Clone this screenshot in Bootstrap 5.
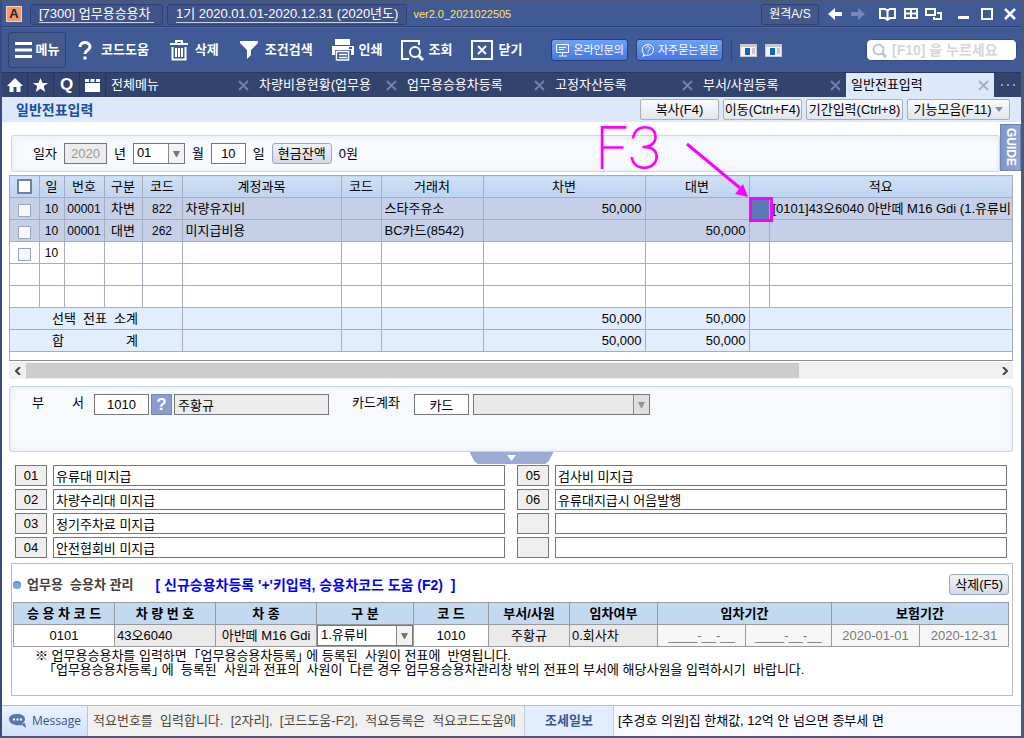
<!DOCTYPE html>
<html lang="ko">
<head>
<meta charset="utf-8">
<meta name="viewport" content="width=device-width, initial-scale=1">
<title>일반전표입력</title>
<link rel="stylesheet" href="https://cdn.jsdelivr.net/npm/bootstrap@5.3.0/dist/css/bootstrap.min.css">
<style>
  body { font-family: "Liberation Sans", "Noto Sans CJK KR", sans-serif; font-size: 13px; line-height: 18px; color: #000; background: #fff; }
  button, input, select { font: inherit; color: inherit; }
  button { border: 0; background: none; padding: 0; }
  a { color: inherit; text-decoration: none; }
  svg { display: block; flex: none; }
  .frame { min-height: 100vh; border: 2px solid #4b5975; border-left-color: #3b4a7d; border-right-width: 3px; }
  .keep { white-space: pre; }

  /* title bar */
  .titlebar { height: 25px; background: #405a96; color: #fff; border-bottom: 1px solid #2d4274; }
  .logo { width: 16px; height: 16px; background: #f09a70; border: 1px solid #fbd3bd; color: #222; font-weight: 700; line-height: 14px; text-align: center; }
  .titlebox { height: 21px; border: 1px solid #2d4274; border-radius: 3px; background: #405487; }
  .titlebox a { border-bottom: 1px solid #c9d2e8; line-height: 17px; }
  .titlebox.first { width: 133px; }
  .ver { color: #ffe75e; font-size: 11px; margin-left: 6px; }
  .remote { width: 58px; height: 21px; border: 1px solid #2d4274; border-radius: 3px; background: #44578a; font-size: 12px; }
  .winbtn { width: 23px; height: 22px; display: flex; align-items: center; justify-content: center; }
  .winset { margin-left: 7px; }

  /* tool bar */
  .toolbar { height: 45px; background: #405a96; color: #fff; border-top: 1px solid #4c66a1; }
  .tool { display: flex; align-items: center; gap: 4px; font-weight: 700; }
  .tool .glyph { width: 24px; display: flex; justify-content: center; }
  .tools { gap: 18px; padding: 0 29px 0 7px; }
  .menubtn { width: 58px; height: 36px; border: 1px solid #2d4274; border-radius: 3px; background: #44598c; justify-content: center; margin-left: 6px; }
  .askbtn { height: 22px; border: 1px solid #2a3e70; border-radius: 3px; background: linear-gradient(#6ea2f7, #4577e2); font-size: 11px; padding: 0 3px 0 4px; gap: 3px; }
  .divider { width: 1px; height: 22px; background: #2f4579; }
  .finder { width: 151px; height: 22px; border: 1px solid #34497d; border-radius: 5px; background: #fff; padding: 0 5px; gap: 5px; }
  .finder input { width: 118px; border: 0; outline: 0; padding: 0; background: none; font-weight: 700; font-size: 14px; line-height: 18px; }
  .finder input::placeholder { color: #d5d6da; opacity: 1; }

  /* tabs */
  .tabbar { height: 25px; background: #32446e; color: #fff; border-top: 1px solid #28375c; }
  .quick { width: 26px; display: flex; align-items: center; justify-content: center; border-right: 1px solid #24355f; font-weight: 700; font-size: 17px; }
  .tabitem { width: 148px; display: flex; align-items: center; justify-content: space-between; padding: 0 5px; color: #fff; }
  .tabitem.active { background: #dde9fb; color: #000; }
  .subbar { height: 25px; background: #dde9fb; padding-right: 11px; }
  .subbar h1 { font-size: 14px; font-weight: 700; color: #174e9e; margin: 0; padding-left: 14px; line-height: 20px; }
  .fnbtn { height: 21px; line-height: 18px; border: 1px solid #a9aeb8; border-radius: 2px; background: linear-gradient(#fafbfc, #e2e5ea); white-space: nowrap; }
  .w79 { width: 79px; } .w98 { width: 97px; } .w103 { width: 103px; }

  /* entry panels */
  .panelbox { background: #f7f9fd; border: 1px solid #c8d6ea; border-radius: 3px; box-shadow: inset 0 0 6px #e3ebf6; }
  .datepanel { height: 37px; margin: 13px 0 3px 9px; padding-left: 21px; gap: 7px; }
  .guide { width: 21px; height: 47px; margin-top: 2px; writing-mode: vertical-rl; background: linear-gradient(90deg, #7f97c6, #93a6cf); border: 1px solid #6c83b3; color: #fff; font-weight: 700; font-size: 12px; line-height: 18px; }
  .field { height: 21px; border: 1px solid #76777b; border-radius: 0; background-color: #fff; padding: 0 3px; }
  .field:disabled, .field.off { background-color: #ececec; color: #999; opacity: 1; }
  .picker { appearance: none; padding: 0 18px 2px 3px; line-height: 17px;
    background: #fff url("data:image/svg+xml,%3Csvg xmlns='http://www.w3.org/2000/svg' width='16' height='19'%3E%3Crect width='16' height='19' fill='%23f3f3f3'/%3E%3Cpath d='M0 0h1v19H0z' fill='%23898989'/%3E%3Cpath d='M5 7h7l-3 6h-1z' fill='%23757575'/%3E%3C/svg%3E") right center no-repeat; }
  .picker:disabled { background-color: #e9e9e9;
    background-image: url("data:image/svg+xml,%3Csvg xmlns='http://www.w3.org/2000/svg' width='16' height='19'%3E%3Crect width='16' height='19' fill='%23dfdfdf'/%3E%3Cpath d='M0 0h1v19H0z' fill='%23898989'/%3E%3Cpath d='M5 7h7l-3 6h-1z' fill='%23959595'/%3E%3C/svg%3E"); }
  .f35 { width: 35px; } .f43 { width: 43px; } .f52 { width: 52px; } .f55 { width: 55px; } .f155 { width: 155px; } .f177 { width: 177px; }
  .cashbtn { height: 21px; line-height: 18px; border: 1px solid #98a7cc; border-radius: 3px; background: linear-gradient(#f0f2f6, #d5dae3); padding: 0 5px; }

  /* slip table */
  .slipwrap { margin: 0 8px 0 7px; border: 1px solid #a5adc0; border-top: 0; border-bottom-color: #8d8d8d; padding-bottom: 8px; }
  .slip { width: 100%; table-layout: fixed; border-collapse: collapse; }
  .slip th, .slip td { height: 22px; padding: 0 3px; border: 1px solid #a5adc0; line-height: 18px; white-space: nowrap; overflow: hidden; font-weight: 400; }
  .slip tr > :first-child { border-left: 0; }
  .slip tr > :last-child { border-right: 0; }
  .slip thead th { background: linear-gradient(#cfe0f7, #bed4ef); text-align: center; }
  .slip .narrow { font-size: 12px; padding: 0; text-align: center; }
  .slip td.desc { padding-right: 0; }
  .slip .picked td { background: #c5d0e8; }
  .slip tfoot td { background: #e2eefd; }
  .slip td.spot { position: relative; overflow: visible; background: #5b78b4 !important; }
  .ring { position: absolute; inset: -1px -4px -3px -1px; border: 3px solid #f0f; z-index: 2; }
  .memo { position: absolute; left: -150px; top: -77px; z-index: 2; pointer-events: none; overflow: visible; }
  .tick { appearance: none; display: block; width: 13px; height: 13px; margin: 3px auto 0; border: 1px solid #98a6c2; background: #f7f7f7; }
  .tickall { width: 15px; height: 15px; border: 2px solid #71809f; background: #fff; margin-top: 0; }
  .sumname { width: 86px; margin-left: 39px; display: flex; justify-content: space-between; }

  .scroller { height: 17px; margin: 1px 8px 7px 7px; background: #f0f0f0; }
  .scroller button { width: 17px; height: 17px; display: flex; align-items: center; justify-content: center; }
  .scroller .thumb { width: 77%; height: 15px; background: #cdcdcd; }
  .deptpanel { height: 66px; margin: 0 8px 0 7px; padding: 7px 0 0 22px; }
  .deptlabel { width: 52px; margin-right: 10px; }
  .cardlabel { margin: 0 14px 0 23px; }
  .helpbtn { width: 21px; height: 21px; margin: 0 2px; background: #8c9dcd; border: 1px solid #7486b8; color: #fff; font-weight: 700; font-size: 17px; line-height: 18px; }
  .fold { width: 84px; height: 12px; background: #9babd6; clip-path: polygon(0 0, 100% 0, 94% 80%, 90% 100%, 10% 100%, 6% 80%); }

  .notes { display: grid; grid-template-columns: 1fr 1fr; column-gap: 12px; row-gap: 3px; padding: 1px 14px 0 13px; }
  .notes > div { display: flex; gap: 6px; }
  .notes .field { padding: 0 2px; }
  .notes .no { width: 32px; text-align: center; background: #efefef; color: #000; }

  /* vehicle section */
  .carbox { margin: 5px 8px 0 9px; border: 1px solid #bdbdbd; height: 133px; padding: 10px 3px 0 1px; }
  .dot { width: 8px; height: 8px; border-radius: 50%; background: #7fa8dc; box-shadow: inset 0 1px 2px #4d7fc2; }
  .carhead { color: #45403c; font-size: 13px; font-weight: 700; margin: 0 22px 0 6px; }
  .carkey { color: #00f; font-size: 14px; font-weight: 700; }
  .cars { width: 100%; table-layout: fixed; border-collapse: collapse; margin-top: 7px; }
  .cars th, .cars td { height: 22px; padding: 0 2px; border: 1px solid #9a9a9a; line-height: 18px; white-space: nowrap; overflow: hidden; text-align: center; }
  .cars th { background: #c3d8f1; }
  .cars .shade { background: #eaeaea; }
  .cars .dim { background: #f7f7f7; color: #777; }
  .cars td.tight { padding: 0; }
  .cars .picker { width: 100%; display: block; }
  .hint { margin: 2px 0 0 22px; line-height: 14px; font-feature-settings: "halt"; }

  .statusbar { height: 31px; margin-top: 10px; border-top: 1px solid #bdbdbd; background: #f8faff; }
  .statusbar > * { display: flex; align-items: center; }
  .msg { width: 86px; background: linear-gradient(#eaf2ff, #d2e2fa); color: #385287; font-family: "Open Sans", sans-serif; font-size: 12px; padding-left: 7px; gap: 5px; border-right: 1px solid #bcc5d5; }
  .msgtext { width: 436px; background: #f0f0f0; color: #4e453e; padding-left: 5px; overflow: hidden; }
  .news { width: 90px; background: #e2eeff; color: #3a5690; font-weight: 700; justify-content: center; border-right: 1px solid #c5cbd8; border-left: 1px solid #c5cbd8; }
</style>
</head>
<body>
<div class="frame d-flex flex-column">

  <header>
    <div class="titlebar d-flex align-items-center">
      <span class="logo ms-1">A</span>
      <div class="titlebox first ms-2 px-2"><a href="#" class="d-block keep">[7300] 업무용승용차</a></div>
      <div class="titlebox ms-1 px-2"><a href="#" class="d-inline-block keep">1기 2020.01.01-2020.12.31 (2020년도)</a></div>
      <span class="ver">ver2.0_2021022505</span>
      <button class="remote ms-auto me-1">원격A/S</button>
      <button class="winbtn" aria-label="뒤로"><svg width="14" height="12"><path d="M0 6 7 0v4h7v4H7v4z" fill="#fff"/></svg></button>
      <button class="winbtn" aria-label="앞으로"><svg width="14" height="12"><path d="M14 6 7 0v4H0v4h7v4z" fill="#7388b8"/></svg></button>
      <button class="winbtn winset" aria-label="책"><svg width="17" height="13" fill="none" stroke="#fff" stroke-width="2"><path d="M1 1h5l2.500 1.500L11 1h5v9h-5l-2.500 2L6 10H1zM8.500 2v9"/></svg></button>
      <button class="winbtn" aria-label="격자"><svg width="14" height="12" fill="none" stroke="#fff" stroke-width="2"><path d="M1 1h12v9H1zM7 1v9M1 5.500h12"/></svg></button>
      <button class="winbtn" aria-label="창 전환"><svg width="17" height="13" fill="none" stroke="#fff" stroke-width="2"><path d="M1 1h9v6H1zM12 5h4v6h-7v-2"/></svg></button>
      <button class="winbtn winset" aria-label="최소화"><svg width="12" height="12"><path d="M0 8h11v3H0z" fill="#fff"/></svg></button>
      <button class="winbtn" aria-label="최대화"><svg width="12" height="12"><path d="M1 1h10v10H1z" fill="none" stroke="#fff" stroke-width="2"/></svg></button>
      <button class="winbtn" aria-label="창 닫기"><svg width="12" height="12"><path d="m1 1 10 10M11 1 1 11" stroke="#fff" stroke-width="2.500"/></svg></button>
    </div>

    <div class="toolbar d-flex align-items-center">
      <button class="tool menubtn"><svg width="17" height="16"><path d="M0 0h17v3H0zM0 6.500h17v3H0zM0 13h17v3H0z" fill="#fff"/></svg>메뉴</button>
      <div class="tools d-flex">
        <button class="tool"><span class="glyph"><svg width="14" height="19" fill="none" stroke="#fff" stroke-width="3"><path d="M2 6c0-6 10-6 10 0 0 3-5 3-5 7"/><path d="M7 15.500v3"/></svg></span>코드도움</button>
        <button class="tool"><span class="glyph"><svg width="18" height="21" fill="none" stroke="#fff" stroke-width="2"><path d="M0 4h18M6 3V1h6v2M2.500 7v12.500h13V7M6 8v9M9 8v9M12 8v9"/></svg></span>삭제</button>
        <button class="tool"><span class="glyph"><svg width="18" height="18"><path d="M0 0h18v2l-7 7v5l-4 4V9L0 2z" fill="#fff"/></svg></span>조건검색</button>
        <button class="tool"><span class="glyph"><svg width="24" height="22"><path d="M4 0h15v6H4zM1 7h22v9h-3v-5H4v5H1z" fill="#fff"/><path d="M5.500 12.500h12V21h-12zM8 15.500h8M8 18.500h8" fill="none" stroke="#fff" stroke-width="1.500"/><path d="M18 8h3v2h-3z" fill="#405a96"/></svg></span>인쇄</button>
        <button class="tool"><span class="glyph"><svg width="23" height="21" fill="none" stroke="#fff" stroke-width="2"><path d="M18 5V1H1v18h7"/><circle cx="14" cy="12" r="5"/><path d="m18 16 4 4" stroke-width="3"/></svg></span>조회</button>
        <button class="tool"><span class="glyph"><svg width="22" height="20" fill="none" stroke="#fff" stroke-width="2"><path d="M1 1h20v18H1z"/><path d="m7 6 8 8M15 6l-8 8"/></svg></span>닫기</button>
      </div>
      <button class="askbtn d-flex align-items-center"><svg width="14" height="13" fill="none" stroke="#fff"><path d="M.5.500h12v8H.5zM6.500 9v3M3 12h8M3 3.500h7M3 5.500h5"/></svg>온라인문의</button>
      <button class="askbtn d-flex align-items-center ms-2"><svg width="14" height="13" fill="none" stroke="#fff"><path d="M2 12.500 3 10C-1 6 2 .500 7 .500S14 6 11 9.500c-2 2-5 2-7 1.500z"/><path d="M5 4.500c0-3 4-2.500 4 0C9 6 7 5.500 7 7.500M7 8.500v1"/></svg>자주묻는질문</button>
      <span class="divider ms-2"></span>
      <button class="ms-2" aria-label="왼쪽 보기"><svg width="17" height="13"><path d="M0 0h17v13H0z" fill="#c9c9c9"/><path d="M1 3h15v9H1z" fill="#f5f5f5"/><path d="M5 4h5v7H5z" fill="#1263c5"/><path d="M12 5h3M12 7h3M12 9h3" stroke="#999"/></svg></button>
      <button class="ms-2" aria-label="오른쪽 보기"><svg width="17" height="13"><path d="M0 0h17v13H0z" fill="#c9c9c9"/><path d="M1 3h15v9H1z" fill="#f5f5f5"/><path d="M5 4h5v7H5z" fill="#1263c5"/><path d="M12 5h3M12 7h3M12 9h3" stroke="#999"/></svg></button>
      <label class="finder d-flex align-items-center ms-auto me-1"><svg width="15" height="15" fill="none" stroke="#b7c5e0" stroke-width="2"><circle cx="6.500" cy="6.500" r="5"/><path d="m10 10 4 4" stroke-width="3"/></svg><input type="text" placeholder="[F10] 을 누르세요" aria-label="검색"></label>
    </div>

    <nav class="tabbar d-flex">
      <a href="#" class="quick" aria-label="홈"><svg width="16" height="14"><path d="M8 0 16 8h-2.500v6H9.500V9h-3v5h-4V8H0z" fill="#fff"/></svg></a>
      <a href="#" class="quick" aria-label="즐겨찾기"><svg width="15" height="14"><path d="m7.500 0 2 5H15l-4.300 3.300L12.300 14l-4.800-3.300L2.700 14l1.600-5.700L0 5h5.500z" fill="#fff"/></svg></a>
      <a href="#" class="quick">Q</a>
      <a href="#" class="quick" aria-label="달력"><svg width="15" height="13"><path d="M0 0h4v3H0zM5.500 0h4v3h-4zM11 0h4v3h-4zM0 4h15v9H0z" fill="#fff"/></svg></a>
      <a href="#" class="tabitem">전체메뉴<svg width="11" height="11"><path d="m1 1 9 9M10 1l-9 9" stroke="#7082ab" stroke-width="2"/></svg></a>
      <a href="#" class="tabitem">차량비용현황(업무용<svg width="11" height="11"><path d="m1 1 9 9M10 1l-9 9" stroke="#7082ab" stroke-width="2"/></svg></a>
      <a href="#" class="tabitem">업무용승용차등록<svg width="11" height="11"><path d="m1 1 9 9M10 1l-9 9" stroke="#7082ab" stroke-width="2"/></svg></a>
      <a href="#" class="tabitem">고정자산등록<svg width="11" height="11"><path d="m1 1 9 9M10 1l-9 9" stroke="#7082ab" stroke-width="2"/></svg></a>
      <a href="#" class="tabitem">부서/사원등록<svg width="11" height="11"><path d="m1 1 9 9M10 1l-9 9" stroke="#7082ab" stroke-width="2"/></svg></a>
      <a href="#" class="tabitem active">일반전표입력<svg width="11" height="11"><path d="m1 1 9 9M10 1l-9 9" stroke="#a3b0c8" stroke-width="2"/></svg></a>
      <button class="flex-fill" aria-label="더 보기"><svg class="mx-auto" width="14" height="3"><path d="M0 0h2v2H0zM6 0h2v2H6zM12 0h2v2h-2z" fill="#8d9cc0"/></svg></button>
    </nav>

    <div class="subbar d-flex align-items-center gap-1">
      <h1 class="me-auto">일반전표입력</h1>
      <button class="fnbtn w79">복사(F4)</button>
      <button class="fnbtn w79">이동(Ctrl+F4)</button>
      <button class="fnbtn w98">기간입력(Ctrl+8)</button>
      <button class="fnbtn w103 d-flex align-items-center justify-content-center gap-1">기능모음(F11)<svg width="8" height="5"><path d="M0 0h8L4 5z" fill="#8b93a3"/></svg></button>
    </div>
  </header>

  <main>
    <div class="d-flex align-items-start">
      <div class="panelbox datepanel flex-fill d-flex align-items-center">
        <label for="yr">일자</label>
        <input id="yr" class="field f43 text-center" value="2020" disabled>
        <label for="mon">년</label>
        <select id="mon" class="field picker f52"><option>01</option></select>
        <label for="day">월</label>
        <input id="day" class="field f35 text-center" value="10">
        <span>일</span>
        <button class="cashbtn">현금잔액</button>
        <span>0원</span>
      </div>
      <button class="guide">GUIDE</button>
    </div>

    <div class="slipwrap">
      <table class="slip">
        <colgroup><col style="width:29px"><col style="width:25px"><col style="width:40px"><col style="width:38px"><col style="width:40px"><col style="width:159px"><col style="width:40px"><col style="width:102px"><col style="width:162px"><col style="width:104px"><col style="width:20px"><col></colgroup>
        <thead><tr><th><input type="checkbox" class="tick tickall" aria-label="전체 선택"></th><th>일</th><th>번호</th><th>구분</th><th>코드</th><th>계정과목</th><th>코드</th><th>거래처</th><th>차변</th><th>대변</th><th colspan="2">적요</th></tr></thead>
        <tbody>
          <tr class="picked"><td><input type="checkbox" class="tick" aria-label="1행 선택"></td><td class="narrow">10</td><td class="narrow">00001</td><td class="text-center">차변</td><td class="narrow">822</td><td>차량유지비</td><td></td><td>스타주유소</td><td class="text-end">50,000</td><td></td>
            <td class="spot"><span class="ring"></span><svg class="memo" width="150" height="77"><text x="-5" y="47" fill="#f0f" stroke="#f0f" stroke-width="2" font-family="Lato, sans-serif" font-weight="200" font-size="58">F3</text><path d="M87 23l53 44" stroke="#f0f" stroke-width="3"/><path d="m148 76-13-3 8-10z" fill="#f0f"/></svg></td>
            <td class="desc">[0101]43오6040 아반떼 M16 Gdi (1.유류비</td></tr>
          <tr class="picked"><td><input type="checkbox" class="tick" aria-label="2행 선택"></td><td class="narrow">10</td><td class="narrow">00001</td><td class="text-center">대변</td><td class="narrow">262</td><td>미지급비용</td><td></td><td>BC카드(8542)</td><td></td><td class="text-end">50,000</td><td></td><td></td></tr>
          <tr><td><input type="checkbox" class="tick" aria-label="3행 선택"></td><td class="narrow">10</td><td></td><td></td><td></td><td></td><td></td><td></td><td></td><td></td><td></td><td></td></tr>
          <tr><td></td><td></td><td></td><td></td><td></td><td></td><td></td><td></td><td></td><td></td><td></td><td></td></tr>
          <tr><td></td><td></td><td></td><td></td><td></td><td></td><td></td><td></td><td></td><td></td><td></td><td></td></tr>
        </tbody>
        <tfoot>
          <tr><td colspan="5"><div class="sumname"><span>선택</span><span>전표</span><span>소계</span></div></td><td></td><td></td><td></td><td class="text-end">50,000</td><td class="text-end">50,000</td><td colspan="2"></td></tr>
          <tr><td colspan="5"><div class="sumname"><span>합</span><span>계</span></div></td><td></td><td></td><td></td><td class="text-end">50,000</td><td class="text-end">50,000</td><td colspan="2"></td></tr>
        </tfoot>
      </table>
    </div>

    <div class="scroller d-flex align-items-center">
      <button aria-label="왼쪽으로"><svg width="6" height="8"><path d="M5 0 1 4l4 4" fill="none" stroke="#444" stroke-width="2"/></svg></button>
      <div class="thumb"></div>
      <button class="ms-auto" aria-label="오른쪽으로"><svg width="6" height="8"><path d="m1 0 4 4-4 4" fill="none" stroke="#444" stroke-width="2"/></svg></button>
    </div>

    <div class="panelbox deptpanel d-flex align-items-start">
      <label for="dept" class="deptlabel d-flex justify-content-between"><span>부</span><span>서</span></label>
      <input id="dept" class="field f55 text-center" value="1010">
      <button class="helpbtn">?</button>
      <input class="field off f155 text-black" aria-label="사원명" value="주황규" readonly>
      <label for="card" class="cardlabel">카드계좌</label>
      <input id="card" class="field f55 text-center me-1" value="카드">
      <select class="field picker f177" aria-label="카드계좌 선택" disabled><option></option></select>
    </div>
    <button class="fold d-flex align-items-center justify-content-center mx-auto" aria-label="접기"><svg width="9" height="6"><path d="M0 0h9L4.500 6z" fill="#fff"/></svg></button>

    <div class="notes">
      <div><input class="field no" aria-label="번호" value="01" readonly><input class="field flex-fill" aria-label="적요 01" value="유류대 미지급"></div>
      <div><input class="field no" aria-label="번호" value="05" readonly><input class="field flex-fill" aria-label="적요 05" value="검사비 미지급"></div>
      <div><input class="field no" aria-label="번호" value="02" readonly><input class="field flex-fill" aria-label="적요 02" value="차량수리대 미지급"></div>
      <div><input class="field no" aria-label="번호" value="06" readonly><input class="field flex-fill" aria-label="적요 06" value="유류대지급시 어음발행"></div>
      <div><input class="field no" aria-label="번호" value="03" readonly><input class="field flex-fill" aria-label="적요 03" value="정기주차료 미지급"></div>
      <div><input class="field no" aria-label="번호" readonly><input class="field flex-fill" aria-label="적요 07"></div>
      <div><input class="field no" aria-label="번호" value="04" readonly><input class="field flex-fill" aria-label="적요 04" value="안전협회비 미지급"></div>
      <div><input class="field no" aria-label="번호" readonly><input class="field flex-fill" aria-label="적요 08"></div>
    </div>

    <section class="carbox">
      <div class="d-flex align-items-center">
        <span class="dot"></span>
        <h2 class="carhead keep">업무용  승용차 관리</h2>
        <span class="carkey keep">[ 신규승용차등록 '+'키입력, 승용차코드 도움 (F2)  ]</span>
        <button class="cashbtn ms-auto">삭제(F5)</button>
      </div>
      <table class="cars">
        <colgroup><col style="width:101px"><col style="width:101px"><col style="width:101px"><col style="width:97px"><col style="width:75px"><col style="width:81px"><col style="width:88px"><col style="width:88px"><col style="width:86px"><col style="width:88px"><col></colgroup>
        <thead><tr><th>승 용 차 코 드</th><th>차 량 번 호</th><th class="keep">차   종</th><th>구 분</th><th>코 드</th><th>부서/사원</th><th>임차여부</th><th colspan="2">임차기간</th><th colspan="2">보험기간</th></tr></thead>
        <tbody><tr><td>0101</td><td class="shade text-start">43오6040</td><td class="shade">아반떼 M16 Gdi</td><td class="tight"><select class="field picker" aria-label="구분"><option>1.유류비</option></select></td><td>1010</td><td class="shade">주황규</td><td class="shade text-start">0.회사차</td><td class="dim">____-__-__</td><td class="dim">____-__-__</td><td class="dim">2020-01-01</td><td class="dim">2020-12-31</td></tr></tbody>
      </table>
      <p class="hint keep">※ 업무용승용차를 입력하면  「업무용승용차등록」 에 등록된  사원이 전표에  반영됩니다.
    「업무용승용차등록」 에  등록된  사원과 전표의  사원이  다른 경우 업무용승용차관리창 밖의 전표의 부서에 해당사원을 입력하시기  바랍니다.</p>
    </section>
  </main>

  <footer class="statusbar d-flex mt-auto">
    <div class="msg"><svg width="18" height="14"><path d="M8 0c5 0 8 2 8 5s-2 4-4 5c1 0 3-1 4-1l1 5-4-3c-7 1-13-1-13-6 0-3 3-5 8-5z" fill="#5a76b0"/><path d="M4 4.500h2v2H4zM7.500 4.500h2v2h-2zM11 4.500h2v2h-2z" fill="#fff"/></svg>Message</div>
    <div class="msgtext keep">적요번호를  입력합니다.  [2자리],  [코드도움-F2],  적요등록은  적요코드도움에</div>
    <a href="#" class="news">조세일보</a>
    <a href="#" class="ps-1">[추경호 의원]집 한채값, 12억 안 넘으면 종부세 면</a>
  </footer>
</div>
<script src="https://cdn.jsdelivr.net/npm/bootstrap@5.3.0/dist/js/bootstrap.bundle.min.js"></script>
</body>
</html>
